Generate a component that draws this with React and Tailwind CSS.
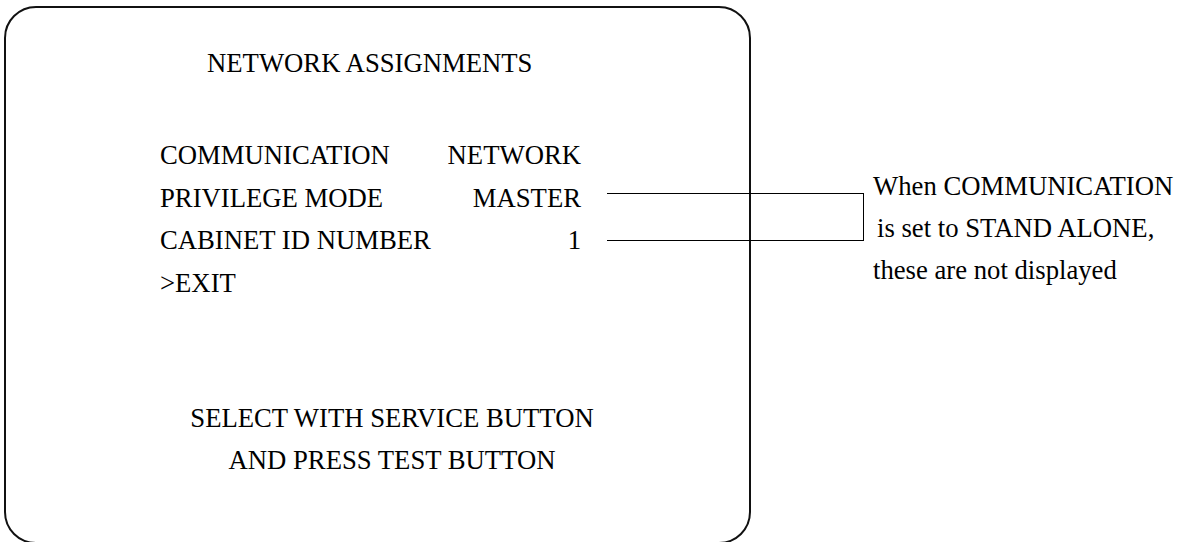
import React from 'react';

const rows = [
    { label: 'COMMUNICATION', value: 'NETWORK' },
    { label: 'PRIVILEGE MODE', value: 'MASTER' },
    { label: 'CABINET ID NUMBER', value: '1' },
    { label: '>EXIT', value: '' },
];

const App = () => {
    return (
        <div className="h-[542px] w-full overflow-hidden bg-white text-black font-['Liberation_Serif'] text-[26.7px]">
            <div className="flex flex-row items-start">
                {/* menu screen */}
                <div className="ml-[4px] mt-[6px] w-[747px] h-[538px] shrink-0 rounded-[32px] border-2 border-[#111] pt-[34px]">
                    <div className="pl-[201px] leading-[42px] whitespace-nowrap">NETWORK ASSIGNMENTS</div>

                    <div className="relative ml-[154px] mt-[50px] w-[421px] leading-[42.5px]">
                        {rows.map(row => (
                            <div key={row.label} className="flex flex-row justify-between whitespace-nowrap">
                                <span>{row.label}</span>
                                <span>{row.value}</span>
                            </div>
                        ))}
                        {/* callout bracket */}
                        <div className="absolute left-[447px] top-[59px] w-[257px] h-[48px] border-y border-r border-black"></div>
                    </div>

                    <div className="ml-[184px] mt-[93px] w-[404px] text-center leading-[42px] whitespace-nowrap">
                        <div>SELECT WITH SERVICE BUTTON</div>
                        <div>AND PRESS TEST BUTTON</div>
                    </div>
                </div>

                {/* note */}
                <div className="ml-[122px] mt-[165px] leading-[42px] whitespace-nowrap">
                    <div>When COMMUNICATION</div>
                    <div className="pl-1">is set to STAND ALONE,</div>
                    <div>these are not displayed</div>
                </div>
            </div>
        </div>
    )
}

export default App;
